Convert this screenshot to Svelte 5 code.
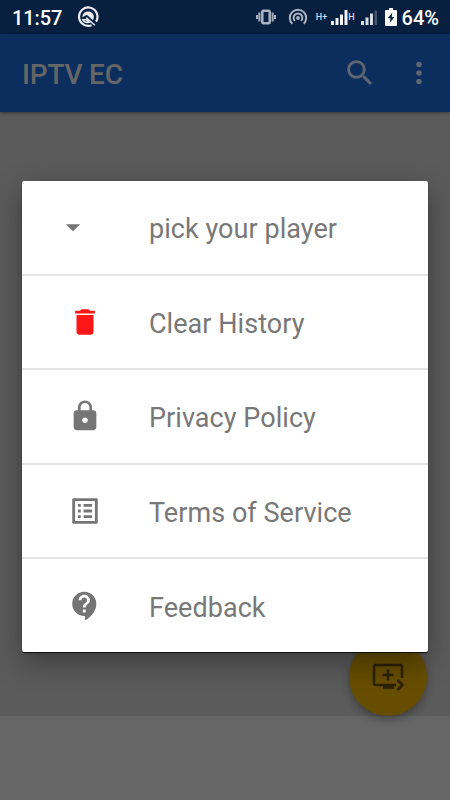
<script lang="ts">
  const grey = '#757575';

  const items = [
    { label: 'pick your player', color: grey, icon: 'M7 10l5 5 5-5z', dropdown: true },
    {
      label: 'Clear History',
      color: '#ff1717',
      icon: 'M6 19c0 1.1.9 2 2 2h8c1.1 0 2-.9 2-2V7H6v12zM19 4h-3.5l-1-1h-5l-1 1H5v2h14V4z'
    },
    {
      label: 'Privacy Policy',
      color: grey,
      icon: 'M18 8h-1V6c0-2.76-2.24-5-5-5S7 3.24 7 6v2H6c-1.1 0-2 .9-2 2v10c0 1.1.9 2 2 2h12c1.1 0 2-.9 2-2V10c0-1.1-.9-2-2-2zm-6 9c-1.1 0-2-.9-2-2s.9-2 2-2 2 .9 2 2-.9 2-2 2zm3.1-9H8.9V6c0-1.71 1.39-3.1 3.1-3.1 1.71 0 3.1 1.39 3.1 3.1v2z'
    },
    {
      label: 'Terms of Service',
      color: grey,
      icon: 'M19 5v14H5V5h14m1.1-2H3.9c-.5 0-.9.4-.9.9v16.2c0 .4.4.9.9.9h16.2c.4 0 .9-.5.9-.9V3.9c0-.5-.5-.9-.9-.9zM11 7h6v2h-6V7zm0 4h6v2h-6v-2zm0 4h6v2h-6zM7 7h2v2H7zm0 4h2v2H7zm0 4h2v2H7z'
    },
    {
      label: 'Feedback',
      color: grey,
      icon: 'M11.5 2C6.81 2 3 5.81 3 10.5S6.81 19 11.5 19h.5v3c4.86-2.34 8-7 8-11.5C20 5.81 16.19 2 11.5 2zm1 14.5h-2v-2h2v2zm0-3.5h-2c0-3.25 3-3 3-5 0-1.1-.9-2-2-2s-2 .9-2 2h-2c0-2.21 1.79-4 4-4s4 1.79 4 4c0 2.5-3 2.75-3 5z'
    }
  ];
</script>

<div class="screen">
  <header class="status">
    <span class="time">11:57</span>
    <svg class="app-mark" viewBox="0 0 22 22" fill="none" stroke="#e8ebf0">
      <path d="M14.6 19.2A9.2 9.2 0 1 1 19 15.6" stroke-width="2.2" />
      <path d="M5.6 9.6a5.8 5.8 0 0 1 11.2.4q.4 2.400-.9 4.200l-5.2-4.800q-1.2-1-2.400 0l-3 2z" fill="#e8ebf0" stroke="none" />
      <path d="M9.200 11.600l8.700 7.600M5.800 13.600q1.800 3.400 6.200 2.700l-3-2.800z" stroke-width="1.5" />
    </svg>
    <div class="tray">
      <svg class="vibrate" viewBox="0 0 20 16" fill="none" stroke="#aab3c1" stroke-width="2">
        <rect x="6.3" y="1.7" width="7.4" height="12.6" rx="1" stroke-width="2.5" />
        <path d="M3.4 3.5v9M16.6 3.5v9M1 6v4M19 6v4" />
      </svg>
      <svg class="hotspot" viewBox="0 0 20 18" fill="none" stroke="#aab3c1" stroke-width="2">
        <path d="M4.3 15.8a8.2 8.2 0 1 1 11.4 0M6.9 12.9a4.4 4.4 0 1 1 6.2 0" />
        <circle cx="10" cy="10" r="1.9" fill="#aab3c1" stroke="none" />
      </svg>
      <span class="net first">H+</span>
      <svg class="signal" viewBox="0 0 17 16" fill="#f2f4f7">
        <path d="M0 12h3v4H0zM4.5 9h3v7h-3zM9 5.5h3V16H9zM13.5 1h3v15h-3z" />
      </svg>
      <span class="net">H</span>
      <svg class="signal second" viewBox="0 0 17 16" fill="#d9dee5">
        <path d="M0 12h3v4H0zM4.5 8.5h3V16h-3zM9 4.5h3V16H9z" />
        <path d="M13.5 1.5H16V16h-2.5z" fill="#46566f" />
      </svg>
      <svg class="battery" viewBox="0 0 12 18">
        <path d="M4 0h4v2h3q1 0 1 1v14q0 1-1 1H1q-1 0-1-1V3q0-1 1-1h3z" fill="#fff" />
        <path d="M7.3 4.4L2.7 10.2h2.8L4.7 15l4.7-6H6.7z" fill="#081f40" />
      </svg>
      <span class="percent">64%</span>
    </div>
  </header>

  <div class="toolbar">
    <h1>IPTV EC</h1>
    <svg class="search" viewBox="0 0 24 24" fill="#5e666f">
      <path d="M15.5 14h-.79l-.28-.27C15.41 12.59 16 11.11 16 9.5 16 5.91 13.09 3 9.5 3S3 5.91 3 9.5 5.91 16 9.5 16c1.61 0 3.09-.59 4.23-1.57l.27.28v.79l5 4.99L20.49 19l-4.99-5zm-6 0C7.01 14 5 11.99 5 9.5S7.01 5 9.5 5 14 7.01 14 9.5 11.99 14 9.5 14z" />
    </svg>
    <svg class="more" viewBox="0 0 24 24" fill="#5e666f">
      <path d="M12 8c1.1 0 2-.9 2-2s-.9-2-2-2-2 .9-2 2 .9 2 2 2zm0 2c-1.1 0-2 .9-2 2s.9 2 2 2 2-.9 2-2-.9-2-2-2zm0 6c-1.1 0-2 .9-2 2s.9 2 2 2 2-.9 2-2-.9-2-2-2z" />
    </svg>
  </div>

  <main></main>
  <div class="banner"></div>

  <button class="fab" aria-label="Add to queue">
    <svg viewBox="0 0 34 28" fill="none" stroke="#2b2104" stroke-width="2.5">
      <path d="M31 15V3.5Q31 2 29.5 2h-25Q3 2 3 3.5v17Q3 22 4.5 22H25" />
      <path d="M17 6.5v11M11.5 12h11M26.5 17l5 5-5 5" />
      <path d="M12 24.3h11" stroke-width="3" />
    </svg>
  </button>

  <ul class="dialog">
    {#each items as item}
      <li>
        <svg class:dropdown={item.dropdown} viewBox="0 0 24 24" fill={item.color}>
          <path d={item.icon} />
        </svg>
        <span>{item.label}</span>
      </li>
    {/each}
  </ul>
</div>

<style>
  :global(body) { margin: 0; }
  .screen { position: relative; display: flex; flex-direction: column; width: 450px; height: 800px; overflow: hidden; background: #666; font-family: Roboto, sans-serif; }
  svg { display: block; flex: none; }

  .status { display: flex; align-items: center; box-sizing: border-box; height: 34px; padding: 0 11px 0 12px; background: #081f40; color: #fff; }
  .time, .percent { padding-top: 1px; font-size: 20px; font-weight: 500; line-height: 34px; }
  .time { width: 65px; letter-spacing: -0.1px; }
  .app-mark { width: 22px; height: 22px; }
  .tray { display: flex; align-items: center; margin-left: auto; }
  .vibrate { width: 20px; height: 16px; }
  .hotspot { width: 20px; height: 18px; margin-left: 12px; }
  .net { color: #d5dae2; font-size: 9px; font-weight: 500; line-height: 16px; }
  .net.first { margin: 0 4px 0 8px; }
  .signal { width: 17px; height: 16px; }
  .signal.second { margin: 0 7px 0 6px; }
  .battery { width: 12px; height: 18px; margin-right: 5px; }

  .toolbar { z-index: 1; display: flex; align-items: center; box-sizing: border-box; height: 78px; padding: 0 14px 0 22px; background: #0b2e5e; box-shadow: 0 1px 3px rgba(0, 0, 0, 0.4); }
  h1 { flex: 1; margin: 0; padding-top: 3px; color: #666; font-size: 28px; font-weight: 500; line-height: 32px; letter-spacing: -0.2px; }
  .search, .more { width: 34px; height: 34px; }
  .more { margin-left: 25px; }

  main { height: 604px; background: #5b5b5b; }
  .banner { flex: 1; background: #666; }

  .fab { position: absolute; left: 349px; top: 638px; display: flex; align-items: center; justify-content: center; width: 78px; height: 78px; padding: 0; border: 0; border-radius: 50%; background: #664d00; box-shadow: 0 4px 9px rgba(0, 0, 0, 0.3); }
  .fab svg { width: 34px; height: 28px; }

  .dialog { position: absolute; left: 22px; top: 181px; width: 406px; height: 471px; display: flex; flex-direction: column; margin: 0; padding: 0; list-style: none; border-radius: 2px; background: #fff; box-shadow: 0 1px 1px #111, 0 10px 28px rgba(0, 0, 0, 0.36); }
  li { display: flex; flex: 1; align-items: center; padding-left: 46px; color: #787878; }
  li + li { border-top: 2px solid #e4e4e4; }
  li svg { width: 34px; height: 34px; margin-right: 47px; }
  li .dropdown { margin: -1px 59px 0 -12px; }
  li span { padding-top: 4px; font-size: 27px; line-height: 32px; letter-spacing: 0.05px; }
</style>
